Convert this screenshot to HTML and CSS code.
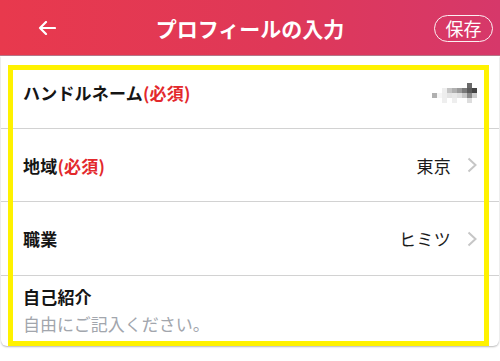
FILE: index.html
```html
<!DOCTYPE html>
<html lang="ja">
<head>
<meta charset="utf-8">
<link rel="stylesheet" href="styles.css">
</head>
<body>
<header class="bar">
  <div class="bar-left">
    <svg class="back" width="18" height="14" viewBox="0 0 18 14"><path d="M17 7H2M8 1L2 7l6 6" fill="none" stroke="#fff" stroke-width="2.2" stroke-linecap="round" stroke-linejoin="round"/></svg>
  </div>
  <h1 class="title">プロフィールの入力</h1>
  <div class="bar-right"><span class="save">保存</span></div>
</header>
<main class="card">
  <div class="row">
    <div class="label">ハンドルネーム<span class="req">(必須)</span></div>
    <svg class="mosaic" width="45" height="20" viewBox="0 0 45 20">
      <rect x="35" y="0" width="5" height="5" fill="#6a6a6a"/>
      <rect x="10" y="5" width="5" height="5" fill="#eeeeee"/>
      <rect x="15" y="5" width="5" height="5" fill="#c4c4c4"/>
      <rect x="20" y="5" width="5" height="5" fill="#b0b0b0"/>
      <rect x="25" y="5" width="5" height="5" fill="#9a9a9a"/>
      <rect x="30" y="5" width="5" height="5" fill="#7a7a7a"/>
      <rect x="35" y="5" width="5" height="5" fill="#5a5a5a"/>
      <rect x="40" y="5" width="5" height="5" fill="#444444"/>
      <rect x="0" y="10" width="5" height="5" fill="#b0b0b0"/>
      <rect x="5" y="10" width="5" height="5" fill="#f6f6f6"/>
      <rect x="10" y="10" width="5" height="5" fill="#ededed"/>
      <rect x="15" y="10" width="5" height="5" fill="#e4e4e4"/>
      <rect x="20" y="10" width="5" height="5" fill="#e8e8e8"/>
      <rect x="25" y="10" width="5" height="5" fill="#e0e0e0"/>
      <rect x="30" y="10" width="5" height="5" fill="#c8c8c8"/>
      <rect x="35" y="10" width="5" height="5" fill="#8a8a8a"/>
      <rect x="40" y="10" width="5" height="5" fill="#cccccc"/>
      <rect x="10" y="15" width="5" height="5" fill="#eeeeee"/>
      <rect x="20" y="15" width="5" height="5" fill="#eeeeee"/>
      <rect x="35" y="15" width="5" height="5" fill="#dddddd"/>
    </svg>
  </div>
  <div class="row">
    <div class="label">地域<span class="req">(必須)</span></div>
    <div class="value">東京<svg class="chev" width="10" height="16" viewBox="0 0 10 16"><path d="M1.5 1.5L8.5 8l-7 6.5" fill="none" stroke="#c6c6c6" stroke-width="2"/></svg></div>
  </div>
  <div class="row row-tall">
    <div class="label">職業</div>
    <div class="value">ヒミツ<svg class="chev" width="10" height="16" viewBox="0 0 10 16"><path d="M1.5 1.5L8.5 8l-7 6.5" fill="none" stroke="#c6c6c6" stroke-width="2"/></svg></div>
  </div>
  <div class="row-intro">
    <div class="label">自己紹介</div>
    <div class="placeholder">自由にご記入ください。</div>
  </div>
</main>
<div class="highlight"></div>
</body>
</html>
```

FILE: styles.css
```css
html, body {
  margin: 0;
  padding: 0;
}
body {
  width: 500px;
  height: 361px;
  background: #ffffff;
  font-family: "Noto Sans CJK JP", "Noto Sans", sans-serif;
  color: #151515;
  position: relative;
  overflow: hidden;
}
.bar {
  height: 55px;
  background: linear-gradient(90deg, #e8394d 0%, #df3858 55%, #d6386a 100%);
  border-bottom: 1px solid #b8788a;
  display: grid;
  grid-template-columns: 1fr auto 1fr;
  align-items: center;
}
.bar-left {
  padding-left: 38px;
  display: flex;
  align-items: center;
}
.back {
  display: block;
  margin-top: 1px;
}
.title {
  margin: 0;
  color: #ffffff;
  font-size: 21px;
  font-weight: 700;
  line-height: 1;
  padding-top: 1px;
}
.bar-right {
  display: flex;
  justify-content: flex-end;
  padding-right: 7px;
}
.save {
  box-sizing: border-box;
  width: 59px;
  height: 27px;
  border: 1.5px solid rgba(255,255,255,0.92);
  border-radius: 14px;
  color: #ffffff;
  font-size: 18px;
  line-height: 24px;
  text-align: center;
  margin-top: 1px;
}
.card {
  background: #ffffff;
  border-radius: 0 0 6px 6px;
  box-shadow: 0 1px 2px rgba(0,0,0,0.28);
  margin: 0 1px;
}
.row {
  height: 72px;
  border-bottom: 1px solid #d2d2d2;
  display: flex;
  align-items: center;
  justify-content: space-between;
  padding: 0 22px 0 22px;
}
.row-tall {
  height: 73px;
}
.label {
  font-size: 17px;
  font-weight: 700;
  letter-spacing: 0.2px;
}
.req {
  color: #e3292c;
}
.value {
  display: flex;
  align-items: center;
  gap: 16px;
  font-size: 17px;
  color: #1a1a1a;
  letter-spacing: 0.3px;
}
.chev {
  display: block;
}
.mosaic {
  display: block;
  margin-top: 2px;
}
.row-intro {
  height: 70px;
  padding: 9px 22px 0 22px;
  box-sizing: border-box;
}
.row-intro .label {
  line-height: 24px;
}
.placeholder {
  font-size: 17px;
  color: #a2a6ad;
  line-height: 24px;
  margin-top: 3px;
}
.highlight {
  position: absolute;
  left: 8px;
  top: 65px;
  width: 481px;
  height: 281px;
  box-sizing: border-box;
  border: 5px solid #fff200;
  pointer-events: none;
}
```
